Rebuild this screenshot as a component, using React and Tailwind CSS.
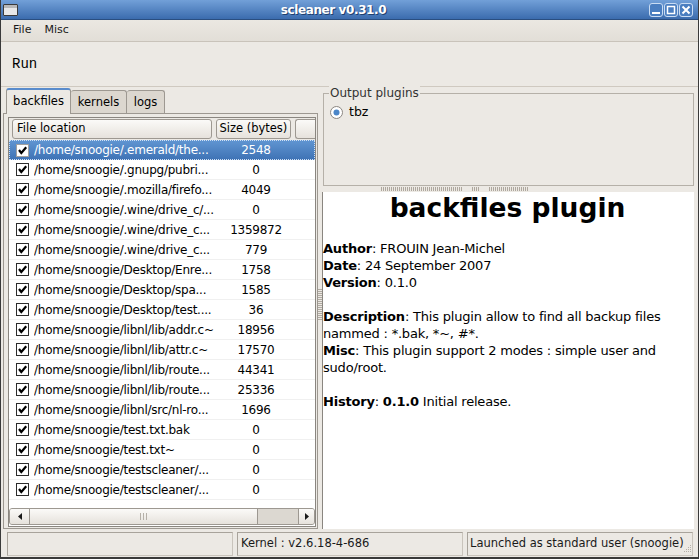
import React from 'react';

const rows = [
  ['/home/snoogie/.emerald/the...', '2548'],
  ['/home/snoogie/.gnupg/pubri...', '0'],
  ['/home/snoogie/.mozilla/firefo...', '4049'],
  ['/home/snoogie/.wine/drive_c/...', '0'],
  ['/home/snoogie/.wine/drive_c...', '1359872'],
  ['/home/snoogie/.wine/drive_c...', '779'],
  ['/home/snoogie/Desktop/Enre...', '1758'],
  ['/home/snoogie/Desktop/spa...', '1585'],
  ['/home/snoogie/Desktop/test....', '36'],
  ['/home/snoogie/libnl/lib/addr.c~', '18956'],
  ['/home/snoogie/libnl/lib/attr.c~', '17570'],
  ['/home/snoogie/libnl/lib/route...', '44341'],
  ['/home/snoogie/libnl/lib/route...', '25336'],
  ['/home/snoogie/libnl/src/nl-ro...', '1696'],
  ['/home/snoogie/test.txt.bak', '0'],
  ['/home/snoogie/test.txt~', '0'],
  ['/home/snoogie/testscleaner/...', '0'],
  ['/home/snoogie/testscleaner/...', '0'],
];

const Check = ({ light }) => (
  <svg width="13" height="13" viewBox="0 0 13 13" className="shrink-0">
    <rect x="0.5" y="0.5" width="12" height="12" fill="#fff" stroke={light ? '#a0a0a0' : '#2b2b2b'} />
    <path d="M3 6 L5.3 9 L10.2 3.2" fill="none" stroke="#000" strokeWidth="2.2" />
  </svg>
);

const TitleButton = ({ children }) => (
  <div className="w-[14px] h-[14px] rounded-[3px] border border-[#c9dcf3] bg-[#4a7ec0] flex items-center justify-center">
    <svg width="10" height="10" viewBox="0 0 10 10">{children}</svg>
  </div>
);

const App = () => {
  return (
    <div className="w-[699px] h-[559px] flex flex-col bg-[#ece9e4] border-x border-b-2 border-[#3a3a3a] font-['DejaVu_Sans',sans-serif] text-black overflow-hidden">
      {/* Title bar */}
      <div className="h-[20px] shrink-0 bg-gradient-to-b from-[#72a0d8] to-[#3b6cae] border-b border-[#2a4e80] flex items-center px-[2px]">
        <div className="w-[15px] h-[12px] bg-[#e8e8e8] border border-[#3a3a3a] rounded-[1px]">
          <div className="h-[3px] bg-[#b8b8b8]" />
        </div>
        <div className="flex-1 text-center text-white font-bold text-[12px] tracking-[-0.4px] leading-none [text-shadow:1px_1px_0_#1f3f6e]">scleaner v0.31.0</div>
        <div className="flex gap-[1px] pr-[3px]">
          <TitleButton>
            <rect x="1" y="7" width="8" height="2" fill="#fff" />
          </TitleButton>
          <TitleButton>
            <rect x="1.5" y="1.5" width="7" height="7" fill="none" stroke="#fff" strokeWidth="1.5" />
          </TitleButton>
          <TitleButton>
            <path d="M1.5 1.5 L8.5 8.5 M8.5 1.5 L1.5 8.5" stroke="#fff" strokeWidth="2" />
          </TitleButton>
        </div>
      </div>

      {/* Menu bar */}
      <div className="h-[22px] shrink-0 bg-gradient-to-b from-[#ebe8e2] to-[#e2ded7] border-b border-[#c9c3ba] flex items-center pl-[12px] gap-[13px] text-[11px] text-[#1a1a1a]">
        <span>File</span>
        <span>Misc</span>
      </div>

      {/* Toolbar */}
      <div className="h-[45px] shrink-0 border-b border-[#cfc9c0] flex items-center pl-[11px] pt-[1px] text-[14px] font-['Liberation_Mono',monospace]">
        Run
      </div>

      {/* Main */}
      <div className="h-[443px] shrink-0 flex pl-[2px]">
        {/* Left panel */}
        <div className="w-[315px] flex flex-col">
          <div className="h-[26px] flex items-end pl-[3px]">
            <div className="h-[26px] w-[65px] bg-[#ece9e4] border-x border-[#9d9891] border-t-2 border-t-[#5a8ccc] rounded-t-[3px] flex items-center justify-center text-[11.5px] relative top-[1px] z-10 pb-[1px]">backfiles</div>
            <div className="h-[23px] w-[56px] bg-[#dcd7cf] border-t border-r border-[#9d9891] rounded-t-[3px] flex items-center justify-center text-[11.5px] pt-[1px]">kernels</div>
            <div className="h-[23px] w-[38px] bg-[#dcd7cf] border-t border-r border-[#9d9891] rounded-t-[3px] flex items-center justify-center text-[11.5px] pt-[1px]">logs</div>
          </div>
          <div className="h-[416px] border border-[#9d9891] pl-[4px] pr-[1px] pt-[3px] pb-px">
            <div className="h-full border border-[#8a8680] bg-white flex flex-col">
              {/* Header */}
              <div className="h-[22px] shrink-0 flex items-center gap-[4px] pl-[3px] bg-[#ece9e4] text-[11.5px]">
                <div className="w-[201px] h-[20px] rounded-[3px] border border-[#9d9891] bg-gradient-to-b from-[#fbfaf8] to-[#e6e2dc] pl-[4px] flex items-center">File location</div>
                <div className="w-[76px] h-[20px] rounded-[3px] border border-[#9d9891] bg-gradient-to-b from-[#fbfaf8] to-[#e6e2dc] flex items-center justify-center whitespace-nowrap">Size (bytes)</div>
                <div className="w-[20px] h-[20px] rounded-l-[3px] border border-r-0 border-[#9d9891] bg-gradient-to-b from-[#fbfaf8] to-[#e6e2dc]" />
              </div>
              {/* Rows */}
              <div className="flex-1 text-[12px] tracking-[-0.25px]">
                {rows.map(([path, size], i) => (
                  <div
                    key={i}
                    className={
                      i === 0
                        ? 'h-[20px] flex items-center bg-gradient-to-b from-[#6196d2] to-[#3e72b4] text-white outline-1 outline-dotted outline-[#cfe0f5] -outline-offset-1'
                        : 'h-[20px] flex items-center border-b border-[#f0f0f0]'
                    }
                  >
                    <div className="w-[25px] pl-[7px] flex items-center">
                      <Check light={i === 0} />
                    </div>
                    <div className="w-[184px] whitespace-nowrap overflow-hidden">{path}</div>
                    <div className="w-[76px] text-center whitespace-nowrap">{size}</div>
                  </div>
                ))}
              </div>
              {/* Horizontal scrollbar */}
              <div className="h-[18px] shrink-0 bg-white flex items-center pb-[1px]">
                <div className="h-[17px] w-full flex border border-[#9d9891] rounded-[3px] bg-[#dcd8d1] overflow-hidden">
                  <div className="w-[20px] border-r border-[#9d9891] bg-gradient-to-b from-[#fbfaf8] to-[#e6e2dc] flex items-center justify-center">
                    <svg width="4" height="7" viewBox="0 0 4 7"><path d="M4 0 L0 3.5 L4 7 Z" fill="#1a1a1a" /></svg>
                  </div>
                  <div className="w-[228px] border-r border-[#9d9891] bg-gradient-to-b from-[#fbfaf8] to-[#e6e2dc] flex items-center justify-center gap-[2px]">
                    <div className="w-px h-[7px] bg-[#b5b0a8]" />
                    <div className="w-px h-[7px] bg-[#b5b0a8]" />
                    <div className="w-px h-[7px] bg-[#b5b0a8]" />
                  </div>
                  <div className="flex-1" />
                  <div className="w-[16px] border-l border-[#9d9891] bg-gradient-to-b from-[#fbfaf8] to-[#e6e2dc] flex items-center justify-center">
                    <svg width="4" height="7" viewBox="0 0 4 7"><path d="M0 0 L4 3.5 L0 7 Z" fill="#1a1a1a" /></svg>
                  </div>
                </div>
              </div>
            </div>
          </div>
        </div>

        {/* Vertical pane handle */}
        <div className="w-[4px] flex flex-col items-center justify-center pb-[8px]">
          <div className="w-[4px] flex flex-col gap-px">
            {Array.from({ length: 16 }).map((_, i) => (
              <div key={i} className="h-px bg-[#b0aaa1]" />
            ))}
          </div>
        </div>

        {/* Right panel */}
        <div className="w-[372px] flex flex-col">
          <div className="h-[99px] pt-[6px] shrink-0 pl-px">
            <div className="h-[93px] border border-[#b5b0a8] relative pt-[9px] pl-[6px]">
              <div className="absolute -top-[8px] left-[5px] bg-[#ece9e4] px-px text-[12px] leading-[14px] text-[#333]">Output plugins</div>
              <div className="flex items-center gap-[6px] text-[12.5px]">
                <svg width="13" height="13" viewBox="0 0 13 13">
                  <circle cx="6.5" cy="6.5" r="6" fill="#fff" stroke="#8a8680" />
                  <circle cx="6.5" cy="6.5" r="3" fill="#4b86c8" />
                </svg>
                <span>tbz</span>
              </div>
            </div>
          </div>
          {/* Horizontal pane handle */}
          <div className="h-[6px] shrink-0 flex items-center pl-[59px]">
            <div className="w-[82px] h-[4px] bg-[repeating-linear-gradient(90deg,#aea79d_0_1px,transparent_1px_2px)]" />
            <div className="w-[9px]" />
            <div className="w-[7px] h-[4px] bg-[repeating-linear-gradient(90deg,#aea79d_0_1px,transparent_1px_2px)]" />
            <div className="w-[10px]" />
            <div className="w-[39px] h-[4px] bg-[repeating-linear-gradient(90deg,#aea79d_0_1px,transparent_1px_2px)]" />
          </div>
          <div className="flex-1 bg-white border-l border-[#8a8680] text-[13px] tracking-[-0.2px] leading-[17px] mb-px pr-[2px]">
            <div className="text-center font-bold text-[26.5px] leading-[30px] pt-px tracking-normal">backfiles plugin</div>
            <div className="pt-[17px]">
              <div><b>Author</b>: FROUIN Jean-Michel</div>
              <div><b>Date</b>: 24 September 2007</div>
              <div><b>Version</b>: 0.1.0</div>
              <div className="h-[17px]" />
              <div><b>Description</b>: This plugin allow to find all backup files nammed : *.bak, *~, #*.</div>
              <div><b>Misc</b>: This plugin support 2 modes : simple user and sudo/root.</div>
              <div className="h-[17px]" />
              <div><b>History</b>: <b>0.1.0</b> Initial release.</div>
            </div>
          </div>
        </div>
      </div>

      {/* Status bar */}
      <div className="h-[27px] shrink-0 flex items-center gap-[4px] pl-[6px] pr-[5px] text-[11.5px] text-[#1a1a1a]">
        <div className="w-[226px] h-[24px] border border-[#c9c4bc] border-t-[#a8a39b] border-l-[#a8a39b]" />
        <div className="w-[226px] h-[24px] border border-[#c9c4bc] border-t-[#a8a39b] border-l-[#a8a39b] flex items-center pl-[3px]">Kernel : v2.6.18-4-686</div>
        <div className="flex-1 h-[24px] border border-[#c9c4bc] border-t-[#a8a39b] border-l-[#a8a39b] flex items-center pl-[2px] whitespace-nowrap overflow-hidden">
          <span className="flex-1 overflow-hidden">Launched as standard user (snoogie)</span>
          <svg width="8" height="8" viewBox="0 0 8 8" className="self-end mb-[2px] shrink-0">
            <g fill="#b5b0a8">
              <rect x="6" y="0" width="1" height="1" />
              <rect x="4" y="2" width="1" height="1" /><rect x="6" y="2" width="1" height="1" />
              <rect x="2" y="4" width="1" height="1" /><rect x="4" y="4" width="1" height="1" /><rect x="6" y="4" width="1" height="1" />
              <rect x="0" y="6" width="1" height="1" /><rect x="2" y="6" width="1" height="1" /><rect x="4" y="6" width="1" height="1" /><rect x="6" y="6" width="1" height="1" />
            </g>
          </svg>
        </div>
      </div>
    </div>
  );
};

export default App;
